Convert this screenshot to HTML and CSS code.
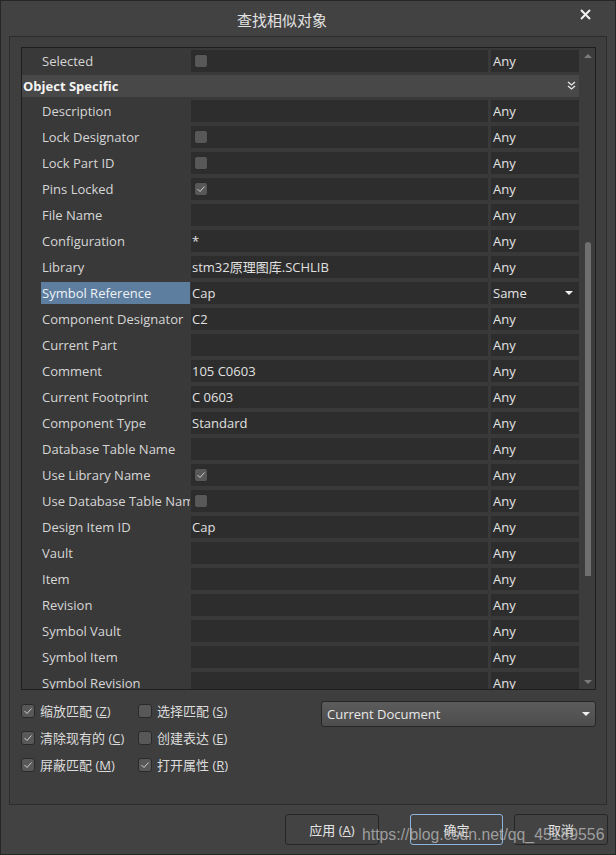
FILE: index.html
```html
<!DOCTYPE html>
<html lang="zh-CN">
<head>
    <meta charset="UTF-8">
    <title>查找相似对象</title>
    <link rel="stylesheet" href="styles.css">
</head>
<body>

    <div class="dialog">
        <!-- Title bar -->
        <div class="titlebar">
            <span class="title">查找相似对象</span>
            <svg class="close" width="11" height="11" viewBox="0 0 11 11">
                <path d="M1 1 L10 10 M10 1 L1 10" stroke="#f2f2f2" stroke-width="2"/>
            </svg>
        </div>

        <div class="panel">
            <!-- Property grid -->
            <div class="grid">
                <div class="rows">
                    <div class="row first"><div class="label">Selected</div><div class="value"><span class="box"></span></div><div class="match">Any</div></div>
                    <div class="section">
                        <span>Object Specific</span>
                        <svg class="chevron" width="9" height="10" viewBox="0 0 9 10">
                            <path d="M1 1 L4.5 4 L8 1 M1 5 L4.5 8 L8 5" stroke="#e8e8e8" stroke-width="1.3" fill="none"/>
                        </svg>
                    </div>
                    <div class="row"><div class="label">Description</div><div class="value"></div><div class="match">Any</div></div>
                    <div class="row"><div class="label">Lock Designator</div><div class="value"><span class="box"></span></div><div class="match">Any</div></div>
                    <div class="row"><div class="label">Lock Part ID</div><div class="value"><span class="box"></span></div><div class="match">Any</div></div>
                    <div class="row"><div class="label">Pins Locked</div><div class="value"><span class="box checked"><svg width="10" height="10" viewBox="0 0 10 10"><path d="M1.5 5 L4 7.5 L8.5 2.5" stroke="#d0d0d0" stroke-width="1" fill="none"/></svg></span></div><div class="match">Any</div></div>
                    <div class="row"><div class="label">File Name</div><div class="value"></div><div class="match">Any</div></div>
                    <div class="row"><div class="label">Configuration</div><div class="value">*</div><div class="match">Any</div></div>
                    <div class="row"><div class="label">Library</div><div class="value">stm32原理图库.SCHLIB</div><div class="match">Any</div></div>
                    <div class="row"><div class="label selected">Symbol Reference</div><div class="value">Cap</div><div class="match combo">Same<span class="caret"></span></div></div>
                    <div class="row"><div class="label">Component Designator</div><div class="value">C2</div><div class="match">Any</div></div>
                    <div class="row"><div class="label">Current Part</div><div class="value"></div><div class="match">Any</div></div>
                    <div class="row"><div class="label">Comment</div><div class="value">105 C0603</div><div class="match">Any</div></div>
                    <div class="row"><div class="label">Current Footprint</div><div class="value">C 0603</div><div class="match">Any</div></div>
                    <div class="row"><div class="label">Component Type</div><div class="value">Standard</div><div class="match">Any</div></div>
                    <div class="row"><div class="label">Database Table Name</div><div class="value"></div><div class="match">Any</div></div>
                    <div class="row"><div class="label">Use Library Name</div><div class="value"><span class="box checked"><svg width="10" height="10" viewBox="0 0 10 10"><path d="M1.5 5 L4 7.5 L8.5 2.5" stroke="#d0d0d0" stroke-width="1" fill="none"/></svg></span></div><div class="match">Any</div></div>
                    <div class="row"><div class="label">Use Database Table Name</div><div class="value"><span class="box"></span></div><div class="match">Any</div></div>
                    <div class="row"><div class="label">Design Item ID</div><div class="value">Cap</div><div class="match">Any</div></div>
                    <div class="row"><div class="label">Vault</div><div class="value"></div><div class="match">Any</div></div>
                    <div class="row"><div class="label">Item</div><div class="value"></div><div class="match">Any</div></div>
                    <div class="row"><div class="label">Revision</div><div class="value"></div><div class="match">Any</div></div>
                    <div class="row"><div class="label">Symbol Vault</div><div class="value"></div><div class="match">Any</div></div>
                    <div class="row"><div class="label">Symbol Item</div><div class="value"></div><div class="match">Any</div></div>
                    <div class="row"><div class="label">Symbol Revision</div><div class="value"></div><div class="match">Any</div></div>
                </div>
                <div class="scrollbar">
                    <span class="arrow-up"></span>
                    <span class="thumb"></span>
                    <span class="arrow-down"></span>
                </div>
            </div>

            <!-- Options -->
            <div class="options">
                <div class="checks">
                    <label class="check"><span class="box checked"><svg width="10" height="10" viewBox="0 0 10 10"><path d="M1.5 5 L4 7.5 L8.5 2.5" stroke="#d0d0d0" stroke-width="1" fill="none"/></svg></span>缩放匹配 <span class="key" lang="en">(<u>Z</u>)</span></label>
                    <label class="check"><span class="box"></span>选择匹配 <span class="key" lang="en">(<u>S</u>)</span></label>
                    <label class="check"><span class="box checked"><svg width="10" height="10" viewBox="0 0 10 10"><path d="M1.5 5 L4 7.5 L8.5 2.5" stroke="#d0d0d0" stroke-width="1" fill="none"/></svg></span>清除现有的 <span class="key" lang="en">(<u>C</u>)</span></label>
                    <label class="check"><span class="box"></span>创建表达 <span class="key" lang="en">(<u>E</u>)</span></label>
                    <label class="check"><span class="box checked"><svg width="10" height="10" viewBox="0 0 10 10"><path d="M1.5 5 L4 7.5 L8.5 2.5" stroke="#d0d0d0" stroke-width="1" fill="none"/></svg></span>屏蔽匹配 <span class="key" lang="en">(<u>M</u>)</span></label>
                    <label class="check"><span class="box checked"><svg width="10" height="10" viewBox="0 0 10 10"><path d="M1.5 5 L4 7.5 L8.5 2.5" stroke="#d0d0d0" stroke-width="1" fill="none"/></svg></span>打开属性 <span class="key" lang="en">(<u>R</u>)</span></label>
                </div>
                <div class="scope">Current Document<span class="caret"></span></div>
            </div>
        </div>

        <!-- Buttons -->
        <div class="buttons">
            <button class="btn">应用 <span class="key" lang="en">(<u>A</u>)</span></button>
            <button class="btn default">确定</button>
            <button class="btn">取消</button>
        </div>

        <div class="watermark">https://blog.csdn.net/qq_45189556</div>
    </div>

</body>
</html>
```

FILE: styles.css
```css
body {
    margin: 0;
    background-color: #424242;
    font-family: "Open Sans", "Noto Sans CJK SC", sans-serif;
    font-size: 13px;
    color: #dadada;
}

.dialog {
    position: relative;
    width: 616px;
    height: 855px;
    box-sizing: border-box;
    border: 1px solid #262626;
    background-color: #424242;
}

.titlebar {
    position: relative;
    height: 35px;
    display: flex;
    align-items: center;
    justify-content: center;
    padding-right: 52px;
}

.title {
    font-family: "Noto Sans CJK SC", sans-serif;
    font-size: 15px;
    color: #e2e2e2;
    margin-top: 1px;
}

.close {
    position: absolute;
    right: 24px;
    top: 8px;
}

.panel {
    margin-left: 8px;
    width: 598px;
    height: 769px;
    box-sizing: border-box;
    border: 1px solid #2c2c2c;
    background-color: #3e3e3e;
    padding: 10px 10px 0 11px;
}

.grid {
    display: flex;
    height: 643px;
    box-sizing: border-box;
    border: 1px solid #1e1e1e;
    background-color: #393939;
    overflow: hidden;
}

.rows {
    flex: 1;
    padding-top: 2px;
}

.row, .section {
    display: flex;
    height: 22px;
    margin-bottom: 4px;
    line-height: 22px;
}

.row.first, .section {
    margin-bottom: 3px;
}

.label {
    width: 148px;
    margin-left: 19px;
    margin-right: 1px;
    padding-left: 1px;
    white-space: nowrap;
    overflow: hidden;
    color: #d6d6d6;
}

.label.selected {
    background-color: #5e7e9f;
    color: #eef2f6;
}

.value {
    width: 296px;
    padding-left: 1px;
    margin-right: 3px;
    background-color: #2d2d2d;
    color: #e0e0e0;
    display: flex;
    align-items: center;
    white-space: nowrap;
}

.value .box {
    margin-left: 2px;
}

.match {
    width: 86px;
    padding-left: 2px;
    background-color: #2d2d2d;
    color: #e4e4e4;
    position: relative;
}

.combo .caret {
    position: absolute;
    right: 6px;
    top: 9px;
}

.caret {
    width: 0;
    height: 0;
    border-left: 4px solid transparent;
    border-right: 4px solid transparent;
    border-top: 4px solid #f0f0f0;
}

.section {
    background-color: #484848;
    font-weight: bold;
    color: #f4f4f4;
    padding-left: 1px;
    justify-content: space-between;
    align-items: center;
}

.chevron {
    margin-right: 3px;
}

.box {
    display: inline-flex;
    align-items: center;
    justify-content: center;
    width: 12px;
    height: 12px;
    border: 1px solid #2a2a2a;
    border-radius: 3px;
    background-color: #585858;
}

.scrollbar {
    position: relative;
    width: 16px;
    background-color: #3c3c3c;
}

.thumb {
    position: absolute;
    left: 6px;
    top: 194px;
    width: 6px;
    height: 334px;
    border-radius: 3px 3px 0 0;
    background-color: #6f6f6f;
}

.arrow-up, .arrow-down {
    position: absolute;
    left: 5px;
    width: 0;
    height: 0;
    border-left: 4px solid transparent;
    border-right: 4px solid transparent;
}

.arrow-up {
    top: 6px;
    border-bottom: 4px solid #7a7a7a;
}

.arrow-down {
    bottom: 5px;
    border-top: 4px solid #7a7a7a;
}

.options {
    display: flex;
    justify-content: space-between;
    padding-top: 11px;
}

.checks {
    display: grid;
    grid-template-columns: 117px auto;
    grid-auto-rows: 27px;
    padding-top: 1px;
}

.check {
    display: flex;
    align-items: center;
    height: 17px;
    color: #dcdcdc;
    white-space: pre;
}

.check .box {
    margin-right: 5px;
}

.key {
    font-family: "Open Sans", sans-serif;
}

.scope {
    position: relative;
    width: 275px;
    height: 26px;
    box-sizing: border-box;
    border: 1px solid #262626;
    border-radius: 3px;
    background: linear-gradient(#5c5c5c, #4c4c4c);
    padding-left: 5px;
    line-height: 24px;
    color: #e8e8e8;
}

.scope .caret {
    position: absolute;
    right: 5px;
    top: 10px;
}

.buttons {
    display: flex;
    justify-content: flex-end;
    gap: 11px;
    padding: 9px 7px 0 0;
}

.btn {
    width: 94px;
    height: 31px;
    border: 1px solid #262626;
    border-radius: 3px;
    background-color: #434343;
    color: #e4e4e4;
    font-family: "Open Sans", "Noto Sans CJK SC", sans-serif;
    font-size: 13px;
}

.btn:first-child {
    margin-right: 20px;
}

.btn.default {
    width: 93px;
    border-color: #8db4dd;
}

.watermark {
    position: absolute;
    left: 361px;
    top: 825px;
    font-family: "Liberation Sans", sans-serif;
    font-size: 15.8px;
    color: rgba(190, 190, 190, 0.75);
    white-space: nowrap;
}
```
